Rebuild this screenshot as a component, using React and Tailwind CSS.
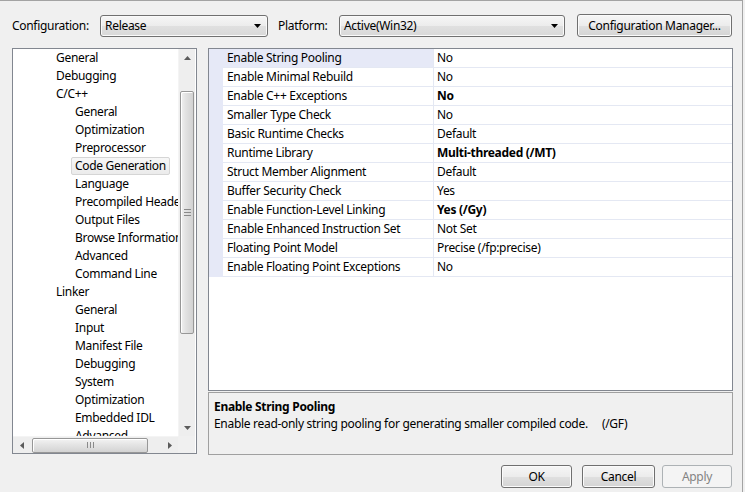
const tree = [
  ["General", 1],
  ["Debugging", 1],
  ["C/C++", 1],
  ["General", 2],
  ["Optimization", 2],
  ["Preprocessor", 2],
  ["Code Generation", 2, true],
  ["Language", 2],
  ["Precompiled Headers", 2],
  ["Output Files", 2],
  ["Browse Information", 2],
  ["Advanced", 2],
  ["Command Line", 2],
  ["Linker", 1],
  ["General", 2],
  ["Input", 2],
  ["Manifest File", 2],
  ["Debugging", 2],
  ["System", 2],
  ["Optimization", 2],
  ["Embedded IDL", 2],
  ["Advanced", 2],
];

const props = [
  ["Enable String Pooling", "No"],
  ["Enable Minimal Rebuild", "No"],
  ["Enable C++ Exceptions", "No", true],
  ["Smaller Type Check", "No"],
  ["Basic Runtime Checks", "Default"],
  ["Runtime Library", "Multi-threaded (/MT)", true],
  ["Struct Member Alignment", "Default"],
  ["Buffer Security Check", "Yes"],
  ["Enable Function-Level Linking", "Yes (/Gy)", true],
  ["Enable Enhanced Instruction Set", "Not Set"],
  ["Floating Point Model", "Precise (/fp:precise)"],
  ["Enable Floating Point Exceptions", "No"],
];

const Arrow = ({ dir, color = "#5b5b5b" }) => {
  const pts = {
    up: "0,4 3.5,0 7,4",
    down: "0,0 7,0 3.5,4",
    left: "4,0 4,7 0,3.5",
    right: "0,0 0,7 4,3.5",
  }[dir];
  const w = dir === "left" || dir === "right" ? 4 : 7;
  const h = dir === "left" || dir === "right" ? 7 : 4;
  return (
    <svg width={w} height={h} viewBox={`0 0 ${w} ${h}`}>
      <polygon points={pts} fill={color} />
    </svg>
  );
};

const Combo = ({ text, width }) => (
  <div
    className={`${width} h-[22px] flex items-center justify-between pl-[4px] pr-[6px] border border-[#707070] rounded-[3px] bg-[linear-gradient(to_bottom,#f6f6f6_0%,#ececec_50%,#e0e0e0_51%,#d8d8d8_100%)] shadow-[inset_0_0_0_1px_#fafafa]`}
  >
    <span>{text}</span>
    <svg width="7" height="4" viewBox="0 0 7 4">
      <polygon points="0,0 7,0 3.5,4" fill="#000" />
    </svg>
  </div>
);

const Button = ({ text, width, disabled }) => (
  <div
    className={
      disabled
        ? `${width} h-[23px] flex items-center justify-center border border-[#adb2b5] rounded-[3px] bg-[#f4f4f4] text-[#838383]`
        : `${width} h-[23px] flex items-center justify-center border border-[#707070] rounded-[3px] bg-[linear-gradient(to_bottom,#f6f6f6_0%,#ececec_50%,#e0e0e0_51%,#d4d4d4_100%)] shadow-[inset_0_0_0_1px_#fbfbfb]`
    }
  >
    {text}
  </div>
);

export default function App() {
  return (
    <div className="w-[745px] h-[492px] bg-[#f0f0f0] overflow-hidden font-['Segoe_UI','Noto_Sans',sans-serif] text-[12px] tracking-[-0.3px] text-black">
      <div className="w-[743px] h-full border-t border-r border-[#a3a3a3] flex flex-col">
        {/* top bar */}
        <div className="flex items-center pt-[13px] pl-[12px]">
          <span className="w-[88px]">Configuration:</span>
          <Combo text="Release" width="w-[168px]" />
          <span className="ml-[10px] w-[61px]">Platform:</span>
          <Combo text="Active(Win32)" width="w-[226px]" />
          <div className="ml-[12px]">
            <Button text="Configuration Manager..." width="w-[155px]" />
          </div>
        </div>

        {/* main */}
        <div className="flex mt-[11px] pl-[12px]">
          {/* tree */}
          <div className="w-[185px] h-[406px] border border-[#828790] bg-white flex flex-col">
            <div className="flex flex-1 min-h-0">
              <div className="w-[165px] overflow-hidden">
                {tree.map(([name, level, sel], i) => (
                  <div
                    key={i}
                    className={`h-[18px] leading-[18px] whitespace-nowrap ${
                      level === 1 ? "pl-[43px]" : sel ? "pl-[58px]" : "pl-[62px]"
                    }`}
                  >
                    {sel ? (
                      <span className="inline-block h-[18px] leading-[16px] px-[3px] border border-[#d5d5d5] rounded-[2px] bg-[linear-gradient(to_bottom,#f7f7f7,#ebebeb)]">
                        {name}
                      </span>
                    ) : (
                      name
                    )}
                  </div>
                ))}
              </div>
              <div className="w-[17px] bg-[#eeeeee] border-l border-[#f4f4f4] flex flex-col">
                <div className="h-[17px] flex items-center justify-center">
                  <Arrow dir="up" />
                </div>
                <div className="mt-[25px] mx-[1px] h-[243px] border border-[#979797] rounded-[2px] bg-[linear-gradient(to_right,#f1f1f1,#e2e2e2_40%,#d2d2d2)] shadow-[inset_1px_1px_0_#ffffff] flex flex-col items-center justify-center gap-[2px]">
                  <div className="w-[7px] h-px bg-[#8a8a8a]" />
                  <div className="w-[7px] h-px bg-[#8a8a8a]" />
                  <div className="w-[7px] h-px bg-[#8a8a8a]" />
                </div>
                <div className="flex-1" />
                <div className="h-[17px] flex items-center justify-center">
                  <Arrow dir="down" />
                </div>
              </div>
            </div>
            <div className="flex h-[17px]">
              <div className="w-[165px] bg-[#eeeeee] border-t border-[#f4f4f4] flex items-center">
                <div className="w-[17px] flex justify-center">
                  <Arrow dir="left" />
                </div>
                <div className="ml-[2px] w-[116px] h-[15px] border border-[#979797] rounded-[2px] bg-[linear-gradient(to_bottom,#f3f3f3,#e4e4e4_45%,#d3d3d3)] shadow-[inset_1px_1px_0_#ffffff] flex items-center justify-center gap-[2px]">
                  <div className="w-px h-[6px] bg-[#8a8a8a]" />
                  <div className="w-px h-[6px] bg-[#8a8a8a]" />
                  <div className="w-px h-[6px] bg-[#8a8a8a]" />
                </div>
                <div className="flex-1" />
                <div className="w-[17px] flex justify-center">
                  <Arrow dir="right" />
                </div>
              </div>
              <div className="w-[17px] bg-[#f0f0f0]" />
            </div>
          </div>

          {/* right side */}
          <div className="ml-[11px] flex flex-col">
            <div className="w-[525px] h-[343px] border border-[#828790] bg-white">
              {props.map(([name, value, bold], i) => (
                <div key={i} className="flex h-[19px] leading-[18px]">
                  <div className="w-[14px] bg-[#e6e9f7]" />
                  <div
                    className={`w-[211px] pl-[4px] border-b border-r border-[#e4e8f3] whitespace-nowrap ${
                      i === 0 ? "bg-[#e6e9f7]" : ""
                    }`}
                  >
                    {name}
                  </div>
                  <div
                    className={`flex-1 pl-[3px] border-b border-[#e4e8f3] whitespace-nowrap ${
                      bold ? "font-bold" : ""
                    }`}
                  >
                    {value}
                  </div>
                </div>
              ))}
            </div>
            <div className="mt-[1px] w-[525px] h-[63px] border border-[#a0a0a0] bg-[#f0f0f0] pl-[5px] pt-[6px]">
              <div className="font-bold leading-[16px]">Enable String Pooling</div>
              <div className="leading-[16px] mt-[1px] whitespace-pre">
                {"Enable read-only string pooling for generating smaller compiled code.     (/GF)"}
              </div>
            </div>
          </div>
        </div>

        {/* buttons */}
        <div className="flex justify-end mt-[10px] pr-[10px]">
          <Button text="OK" width="w-[71px]" />
          <div className="ml-[10px]">
            <Button text="Cancel" width="w-[73px]" />
          </div>
          <div className="ml-[7px]">
            <Button text="Apply" width="w-[70px]" disabled />
          </div>
        </div>
      </div>
    </div>
  );
}
